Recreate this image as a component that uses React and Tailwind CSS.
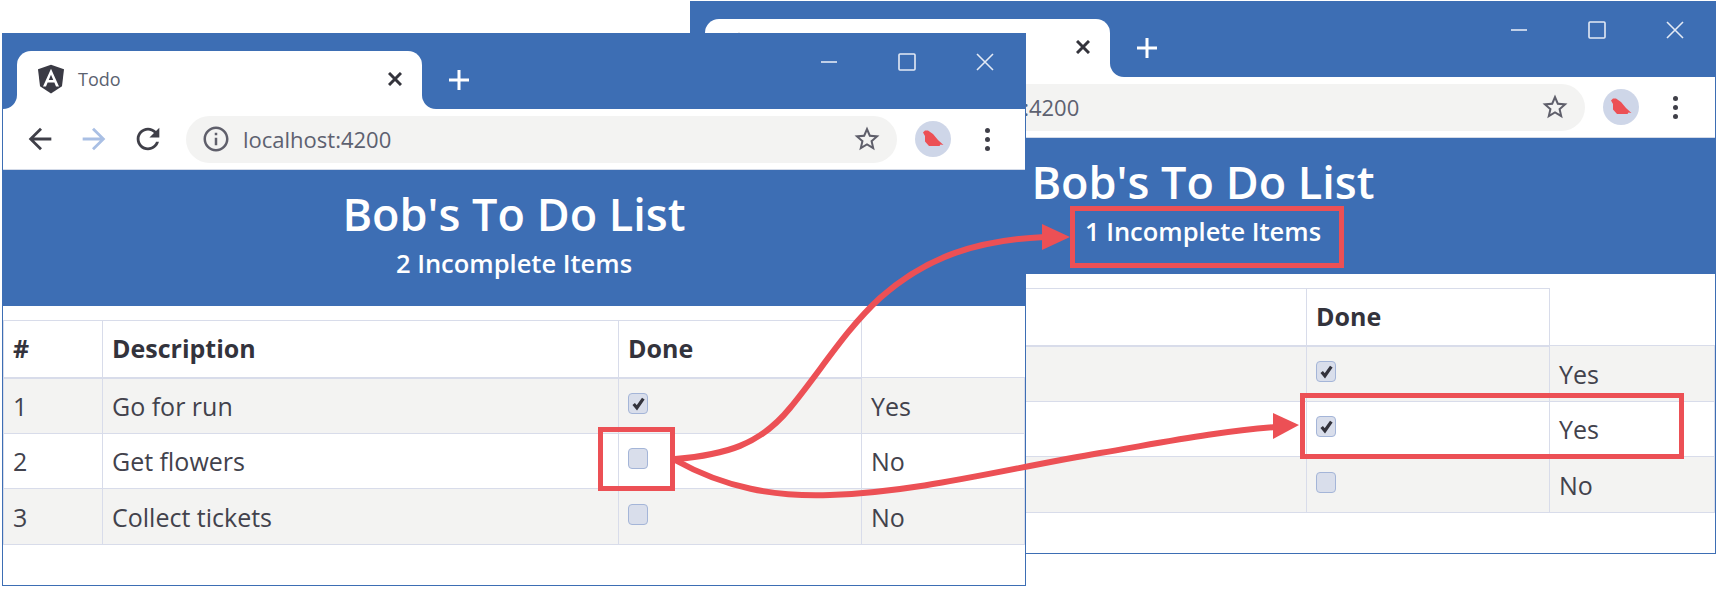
const BACK_PATH = 'M20 11H7.83l5.59-5.59L12 4l-8 8 8 8 1.41-1.41L7.83 13H20v-2z'
const FORWARD_PATH = 'M12 4l-1.41 1.41L16.17 11H4v2h12.17l-5.58 5.59L12 20l8-8z'
const RELOAD_PATH = 'M17.65 6.35C16.2 4.9 14.21 4 12 4c-4.42 0-7.99 3.58-7.99 8s3.57 8 7.99 8c3.73 0 6.84-2.55 7.73-6h-2.08c-.82 2.33-3.04 4-5.65 4-3.31 0-6-2.69-6-6s2.69-6 6-6c1.66 0 3.14.69 4.22 1.78L13 11h7V4l-2.35 2.35z'
const INFO_PATH = 'M11 7h2v2h-2zm0 4h2v6h-2zm1-9C6.48 2 2 6.48 2 12s4.48 10 10 10 10-4.48 10-10S17.52 2 12 2zm0 18c-4.41 0-8-3.59-8-8s3.59-8 8-8 8 3.59 8 8-3.59 8-8 8z'
const STAR_PATH = 'M22 9.24l-7.19-.62L12 2 9.19 8.63 2 9.24l5.46 4.73L5.82 21 12 17.27 18.18 21l-1.63-7.03L22 9.24zM12 15.4l-3.76 2.27 1-4.28-3.32-2.88 4.38-.38L12 6.1l1.71 4.04 4.38.38-3.32 2.88 1 4.28L12 15.4z'

function Icon({ d, className }) {
  return (
    <svg viewBox="0 0 24 24" fill="currentColor" className={className}>
      <path d={d} />
    </svg>
  )
}

function AngularLogo() {
  return (
    <svg viewBox="0 0 24 24" className="h-[30px] w-[30px] shrink-0">
      <path fill="#3a3a44" d="M12 .5 1.6 4.2l1.6 13.6L12 23.5l8.8-5.7 1.6-13.6z" />
      <path
        fill="#fff"
        fillRule="evenodd"
        d="M12 3.8 5.6 18h2.4l1.3-3.2h5.4l1.3 3.2h2.4zM13.8 12.8h-3.6L12 8.5z"
      />
    </svg>
  )
}

function Avatar() {
  return (
    <svg viewBox="0 0 36 36" className="h-9 w-9 shrink-0">
      <circle cx="18" cy="18" r="18" fill="#ced6e8" />
      <path fill="#ec5055" d="M8 11.5 10 9.5h3l5 3.5 5 6 5.5 5-3-.5-1 1.500H14l-4-4.500V15z" />
    </svg>
  )
}

function WindowControls() {
  return (
    <div className="absolute right-[31px] top-[19px] flex items-center gap-[60px] text-[#e4eaf5]">
      <svg viewBox="0 0 18 18" className="h-[18px] w-[18px]" stroke="currentColor" strokeWidth="1.6">
        <path d="M1 9h16" />
      </svg>
      <svg viewBox="0 0 18 18" className="h-[18px] w-[18px]" fill="none" stroke="currentColor" strokeWidth="1.6">
        <rect x="1" y="1" width="16" height="16" rx="1" />
      </svg>
      <svg viewBox="0 0 18 18" className="h-[18px] w-[18px]" stroke="currentColor" strokeWidth="1.6">
        <path d="m1 1 16 16M17 1 1 17" />
      </svg>
    </div>
  )
}

function TabStrip() {
  return (
    <div className="relative flex h-[75px] items-end bg-[#3d6eb4] pl-[14px]">
      <div className="relative flex h-[58px] w-[405px] items-center rounded-t-[14px] bg-white pb-[2px] pl-[19px] pr-[20px]">
        <div className="absolute -left-[14px] bottom-0 h-[14px] w-[14px] bg-white">
          <div className="h-full w-full rounded-br-[14px] bg-[#3d6eb4]" />
        </div>
        <div className="absolute -right-[14px] bottom-0 h-[14px] w-[14px] bg-white">
          <div className="h-full w-full rounded-bl-[14px] bg-[#3d6eb4]" />
        </div>
        <AngularLogo />
        <span className="ml-[12px] flex-1 text-[18px] text-[#5b6270]">Todo</span>
        <svg viewBox="0 0 14 14" className="h-[14px] w-[14px]" stroke="#34343c" strokeWidth="3">
          <path d="m1 1 12 12M13 1 1 13" />
        </svg>
      </div>
      <svg viewBox="0 0 20 20" className="mb-[19px] ml-[27px] h-5 w-5" stroke="#fff" strokeWidth="3">
        <path d="M10 0v20M0 10h20" />
      </svg>
      <WindowControls />
    </div>
  )
}

function Toolbar() {
  return (
    <div className="flex h-[61px] items-center border-b border-[#d3dae8] bg-white pl-[10px]">
      <div className="flex w-[162px] shrink-0">
        <div className="flex w-[54px] justify-center text-[#3f3f48]">
          <Icon d={BACK_PATH} className="h-[34px] w-[34px]" />
        </div>
        <div className="flex w-[54px] justify-center text-[#a9bfe4]">
          <Icon d={FORWARD_PATH} className="h-[34px] w-[34px]" />
        </div>
        <div className="flex w-[54px] justify-center text-[#3f3f48]">
          <Icon d={RELOAD_PATH} className="h-[34px] w-[34px]" />
        </div>
      </div>
      <div className="ml-[11px] flex h-[47px] w-[711px] shrink-0 items-center rounded-full bg-[#f3f3f2] pl-[15px] pr-[15px]">
        <Icon d={INFO_PATH} className="h-[30px] w-[30px] text-[#5f5f6b]" />
        <span className="ml-[12px] flex-1 text-[22px] text-[#5d6170]">localhost:4200</span>
        <Icon d={STAR_PATH} className="h-[30px] w-[30px] text-[#5f5f6b]" />
      </div>
      <div className="ml-[18px]">
        <Avatar />
      </div>
      <div className="ml-[34px] flex flex-col gap-[4px]">
        <span className="h-[5px] w-[5px] rounded-full bg-[#3f3f48]" />
        <span className="h-[5px] w-[5px] rounded-full bg-[#3f3f48]" />
        <span className="h-[5px] w-[5px] rounded-full bg-[#3f3f48]" />
      </div>
    </div>
  )
}

function Checkbox({ checked }) {
  return (
    <span className="-mt-[6px] flex h-[21px] w-5 items-center justify-center rounded-[4px] border border-[#a4b5d8] bg-[#d9deeb]">
      {checked && (
        <svg viewBox="0 0 14 14" className="h-[15px] w-[15px]" fill="none" stroke="#33333c" strokeWidth="3">
          <path d="m2.500 7.500 3 3.500 6-8.500" />
        </svg>
      )}
    </span>
  )
}

const cellClass = 'border border-[#d8dcea] px-[9px] pt-[2px]'
const headClass = 'border border-b-2 border-[#d8dcea] px-[9px] text-left'

function TodoTable({ items }) {
  return (
    <table className="w-full table-fixed border-collapse text-[25px] text-[#42424c]">
      <colgroup>
        <col className="w-[99px]" />
        <col className="w-[516px]" />
        <col className="w-[243px]" />
        <col />
      </colgroup>
      <thead>
        <tr className="h-[57px] font-bold text-[#33333c]">
          <th className={headClass}>#</th>
          <th className={headClass}>Description</th>
          <th className={headClass}>Done</th>
        </tr>
      </thead>
      <tbody>
        {items.map((item, i) => (
          <tr key={item.id} className={`h-[55.5px] ${i % 2 === 0 ? 'bg-[#f3f3f2]' : 'bg-white'}`}>
            <td className={cellClass}>{item.id}</td>
            <td className={cellClass}>{item.text}</td>
            <td className={cellClass}>
              <Checkbox checked={item.done} />
            </td>
            <td className={cellClass}>{item.done ? 'Yes' : 'No'}</td>
          </tr>
        ))}
      </tbody>
    </table>
  )
}

function BrowserWindow({ className, incomplete, items }) {
  return (
    <div className={`absolute flex h-[553px] flex-col border border-[#3d6eb4] bg-white ${className}`}>
      <TabStrip />
      <Toolbar />
      <div className="flex h-[136px] flex-col items-center bg-[#3d6eb4] pt-[16px] text-white">
        <h1 className="text-[45px] font-semibold leading-[56px]">Bob's To Do List</h1>
        <h2 className="mt-[6px] text-[25.500px] font-semibold leading-[30px]">{incomplete} Incomplete Items</h2>
      </div>
      <div className="pt-[14px]">
        <TodoTable items={items} />
      </div>
    </div>
  )
}

const frontItems = [
  { id: 1, text: 'Go for run', done: true },
  { id: 2, text: 'Get flowers', done: false },
  { id: 3, text: 'Collect tickets', done: false },
]

// first columns of the back window sit behind the front one
const backItems = [
  { id: '', text: '', done: true },
  { id: ' ', text: '', done: true },
  { id: '  ', text: '', done: false },
]

export default function App() {
  return (
    <div className="relative h-[589px] w-[1716px] overflow-hidden bg-white font-['Open_Sans',sans-serif]">
      <BrowserWindow className="left-[690px] top-[1px] w-[1026px]" incomplete={1} items={backItems} />
      <BrowserWindow className="left-[2px] top-[33px] w-[1024px]" incomplete={2} items={frontItems} />

      {/* red callouts */}
      <div className="absolute left-[598px] top-[427px] h-[64px] w-[77px] border-[5px] border-[#ec5055]" />
      <div className="absolute left-[1070px] top-[206px] h-[62px] w-[274px] border-[5px] border-[#ec5055]" />
      <div className="absolute left-[1300px] top-[393px] h-[66px] w-[384px] border-[5px] border-[#ec5055]" />
      <svg viewBox="0 0 1716 589" className="absolute left-0 top-0 h-[589px] w-[1716px]" fill="none">
        <path
          d="M675 459C725 455 760 445 790 408C820 372 845 330 880 298C925 258 975 240 1045 237"
          stroke="#ec5055"
          strokeWidth="6"
        />
        <path d="M1042 224 1070 237 1042 250z" fill="#ec5055" />
        <path
          d="M675 460C725 488 775 497 830 495C920 492 1010 468 1100 453C1160 443 1220 431 1276 427"
          stroke="#ec5055"
          strokeWidth="6"
        />
        <path d="M1273 413 1299 425 1273 439z" fill="#ec5055" />
      </svg>
    </div>
  )
}
